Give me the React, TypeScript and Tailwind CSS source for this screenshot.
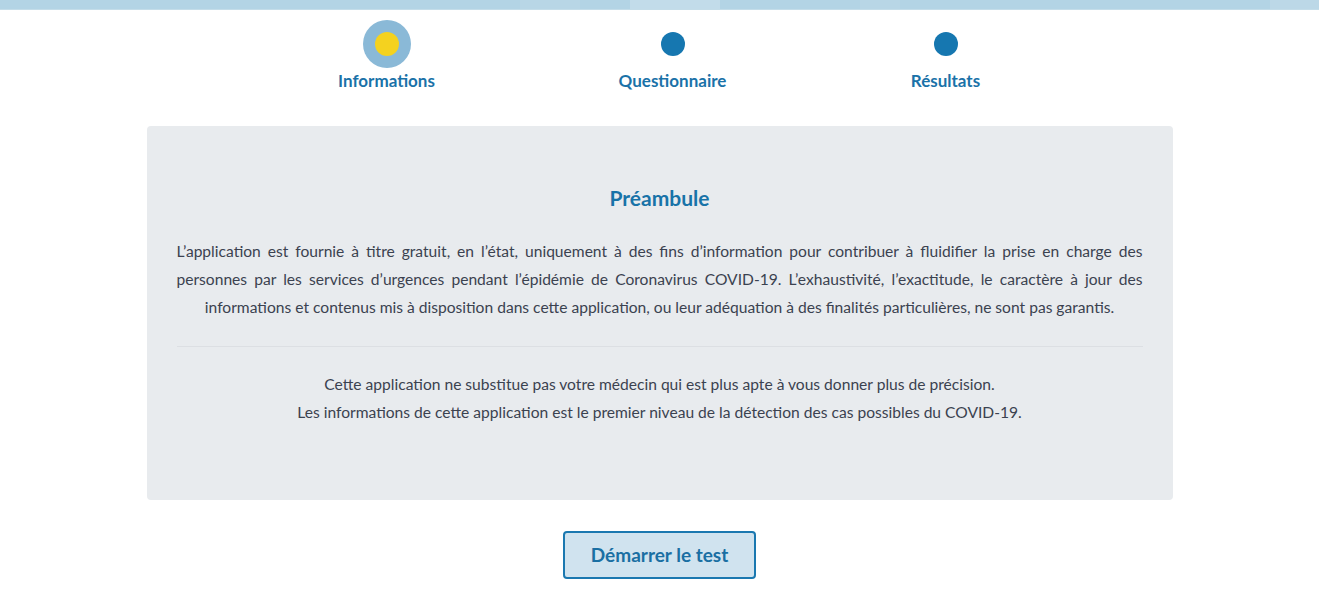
import React from "react";

const steps = [
  { label: "Informations", w: "w-[286px]", active: true },
  { label: "Questionnaire", w: "w-[286px]", active: false },
  { label: "Résultats", w: "w-[260px]", active: false },
];

export default function App() {
  return (
    <div className="min-h-[599px] bg-white font-['Lato',sans-serif]">
      <div className="relative h-[10px] overflow-hidden bg-[#b3d4e5] border-b border-[#c4dde9]">
        <div className="absolute left-[520px] top-0 h-[10px] w-[60px] bg-[#b8d6e6]" />
        <div className="absolute left-[630px] top-0 h-[10px] w-[90px] bg-[#c2dcea]" />
        <div className="absolute left-[860px] top-0 h-[10px] w-[40px] bg-[#b8d6e6]" />
        <div className="absolute left-[1270px] top-0 h-[10px] w-[60px] bg-[#bcd8e7]" />
      </div>

      <div className="flex justify-center pt-[10px]">
        {steps.map((s) => (
          <div key={s.label} className={`${s.w} flex flex-col items-center`}>
            <div className="flex h-[48px] w-[48px] items-center justify-center">
              {s.active ? (
                <div className="flex h-[48px] w-[48px] items-center justify-center rounded-full bg-[#8ab9d7]">
                  <div className="h-[24px] w-[24px] rounded-full bg-[#f4d21f]" />
                </div>
              ) : (
                <div className="h-[24px] w-[24px] rounded-full bg-[#1677b0]" />
              )}
            </div>
            <div className="mt-[3px] text-[17px] font-bold leading-[20px] text-[#1a72a8]">
              {s.label}
            </div>
          </div>
        ))}
      </div>

      <div className="mx-auto mt-[35px] w-[1026px] rounded-[4px] bg-[#e8ebee] px-[30px] pt-[58px] pb-[74px]">
        <h2 className="text-center text-[21px] font-bold leading-[28px] text-[#1873a8]">
          Préambule
        </h2>
        <p className="mt-[25px] text-justify [text-align-last:center] text-[15.6px] leading-[28px] text-[#3b4250]">
          L’application est fournie à titre gratuit, en l’état, uniquement à des fins d’information pour contribuer à fluidifier la prise en charge des personnes par les services d’urgences pendant l’épidémie de Coronavirus COVID-19. L’exhaustivité, l’exactitude, le caractère à jour des informations et contenus mis à disposition dans cette application, ou leur adéquation à des finalités particulières, ne sont pas garantis.
        </p>
        <div className="mt-[25px] h-px bg-[#dcdfe3]" />
        <p className="mt-[23px] text-center text-[15.6px] leading-[28px] text-[#3b4250]">
          Cette application ne substitue pas votre médecin qui est plus apte à vous donner plus de précision.
          <br />
          Les informations de cette application est le premier niveau de la détection des cas possibles du COVID-19.
        </p>
      </div>

      <div className="flex justify-center pt-[31px]">
        <button className="h-[48px] w-[193px] rounded-[4px] border-2 border-[#1a78b0] bg-[#d0e3ef] text-[19px] font-bold text-[#1a6fa3]">
          Démarrer le test
        </button>
      </div>
    </div>
  );
}
